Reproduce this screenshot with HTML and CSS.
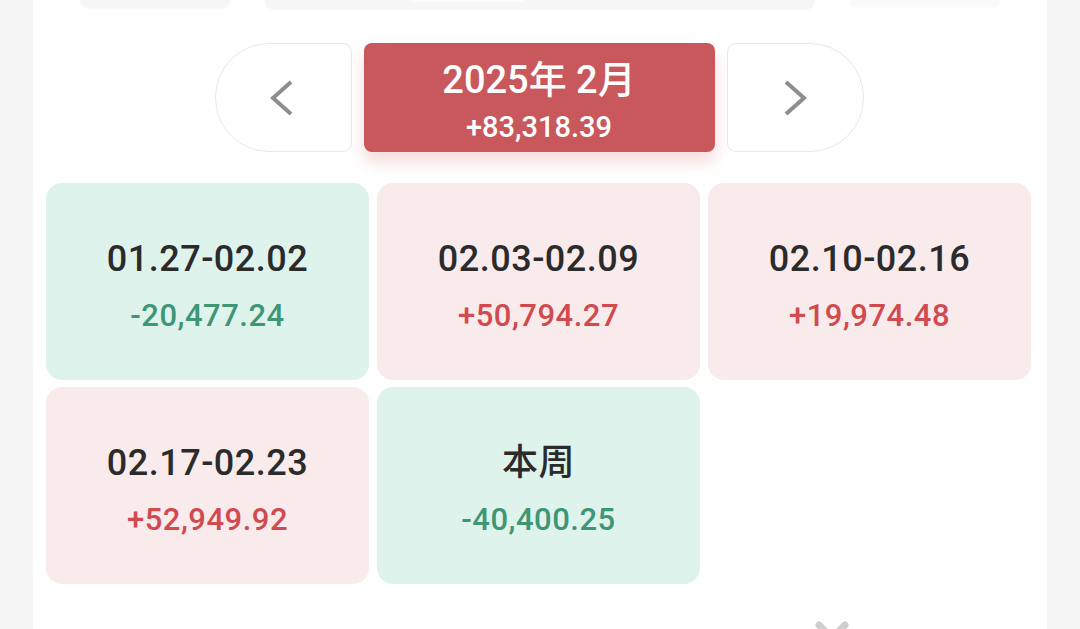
FILE: index.html
```html
<!DOCTYPE html>
<html lang="zh-CN">
<head>
  <meta charset="UTF-8">
  <meta name="viewport" content="width=device-width, initial-scale=1.0">
  <title>周收益</title>
  <link rel="stylesheet" href="styles.css">
</head>
<body>
  <div class="panel">
    <!-- tab bar, scrolled mostly out of view -->
    <div class="tabs">
      <div class="tab tab-a"></div>
      <div class="tab tab-b"><div class="tab-inner"></div></div>
      <div class="tab tab-c"></div>
    </div>

    <div class="month-nav">
      <button class="nav-btn nav-prev" aria-label="上一月">
        <svg width="24" height="36" viewBox="0 0 24 36"><polyline points="21,2 3,18 21,34" fill="none" stroke="#8e8e8e" stroke-width="4"/></svg>
      </button>
      <div class="month-current">
        <div class="month-title">2025年 2月</div>
        <div class="month-total">+83,318.39</div>
      </div>
      <button class="nav-btn nav-next" aria-label="下一月">
        <svg width="24" height="36" viewBox="0 0 24 36"><polyline points="3,2 21,18 3,34" fill="none" stroke="#8e8e8e" stroke-width="4"/></svg>
      </button>
    </div>

    <div class="weeks">
      <div class="week loss">
        <div class="week-range">01.27-02.02</div>
        <div class="week-value">-20,477.24</div>
      </div>
      <div class="week gain">
        <div class="week-range">02.03-02.09</div>
        <div class="week-value">+50,794.27</div>
      </div>
      <div class="week gain">
        <div class="week-range">02.10-02.16</div>
        <div class="week-value">+19,974.48</div>
      </div>
      <div class="week gain">
        <div class="week-range">02.17-02.23</div>
        <div class="week-value">+52,949.92</div>
      </div>
      <div class="week loss">
        <div class="week-range">本周</div>
        <div class="week-value">-40,400.25</div>
      </div>
    </div>

    <div class="footer">
      <svg class="close-icon" width="34" height="34" viewBox="0 0 34 34"><path d="M4 4 L30 30 M30 4 L4 30" stroke="#cfcfcf" stroke-width="7" stroke-linecap="round"/></svg>
    </div>
  </div>
</body>
</html>
```

FILE: styles.css
```css
body {
  margin: 0;
  background: #f5f5f5;
  font-family: Roboto, "Noto Sans CJK SC", sans-serif;
  overflow: hidden;
}
.panel {
  margin-left: 33px;
  width: 1014px;
  height: 629px;
  background: #fff;
  box-sizing: border-box;
  padding: 0 16px 0 13px;
}
.tabs {
  display: flex;
  height: 10px;
  align-items: flex-start;
}
.tab {
  height: 8px;
  background: #f6f6f6;
  border-radius: 0 0 24px 24px;
  box-shadow: 0 1px 2px rgba(0, 0, 0, 0.03);
}
.tab-a {
  margin-left: 34px;
  width: 150px;
}
.tab-b {
  margin-left: 35px;
  width: 550px;
  height: 9px;
}
.tab-inner {
  margin-left: 145px;
  width: 115px;
  height: 2px;
  background: #fbfbfb;
  border-radius: 0 0 10px 10px;
}
.tab-c {
  margin-left: 35px;
  width: 150px;
  height: 6px;
  background: #fafafa;
}
.month-nav {
  display: flex;
  justify-content: center;
  gap: 12px;
  margin-top: 33px;
  padding-left: 1px;
}
.nav-btn {
  width: 137px;
  height: 109px;
  background: #fff;
  border: 1px solid #e8e8e8;
  display: flex;
  align-items: center;
  justify-content: center;
  padding: 0;
  cursor: pointer;
}
.nav-prev {
  border-radius: 54px 9px 9px 54px;
}
.nav-prev svg {
  margin-left: -3px;
}
.nav-next {
  border-radius: 9px 54px 54px 9px;
}
.month-current {
  width: 351px;
  height: 109px;
  background: #c9585c;
  border-radius: 8px;
  color: #fff;
  display: flex;
  flex-direction: column;
  align-items: center;
  justify-content: center;
  padding-top: 7px;
  box-sizing: border-box;
  box-shadow: 0 10px 16px rgba(214, 90, 94, 0.22);
}
.month-title {
  font-size: 38px;
  font-weight: 500;
  line-height: 44px;
}
.month-total {
  font-size: 29px;
  font-weight: 500;
  line-height: 34px;
  margin-top: 8px;
}
.weeks {
  display: grid;
  grid-template-columns: repeat(3, 1fr);
  column-gap: 8px;
  row-gap: 7px;
  margin-top: 31px;
}
.week {
  height: 197px;
  border-radius: 16px;
  display: flex;
  flex-direction: column;
  align-items: center;
  justify-content: center;
  padding-top: 8px;
  box-sizing: border-box;
}
.week.loss {
  background: #def3ec;
}
.week.gain {
  background: #f9ebeb;
}
.week-range {
  font-size: 36px;
  font-weight: 500;
  color: #2b2b2b;
  line-height: 46px;
  letter-spacing: 0.5px;
}
.week-value {
  font-size: 31px;
  font-weight: 500;
  line-height: 40px;
  margin-top: 14px;
  letter-spacing: 0.5px;
}
.loss .week-value {
  color: #3f9677;
}
.gain .week-value {
  color: #d04a4f;
}
.footer {
  display: flex;
  margin-top: 37px;
  padding-left: 769px;
}
```
